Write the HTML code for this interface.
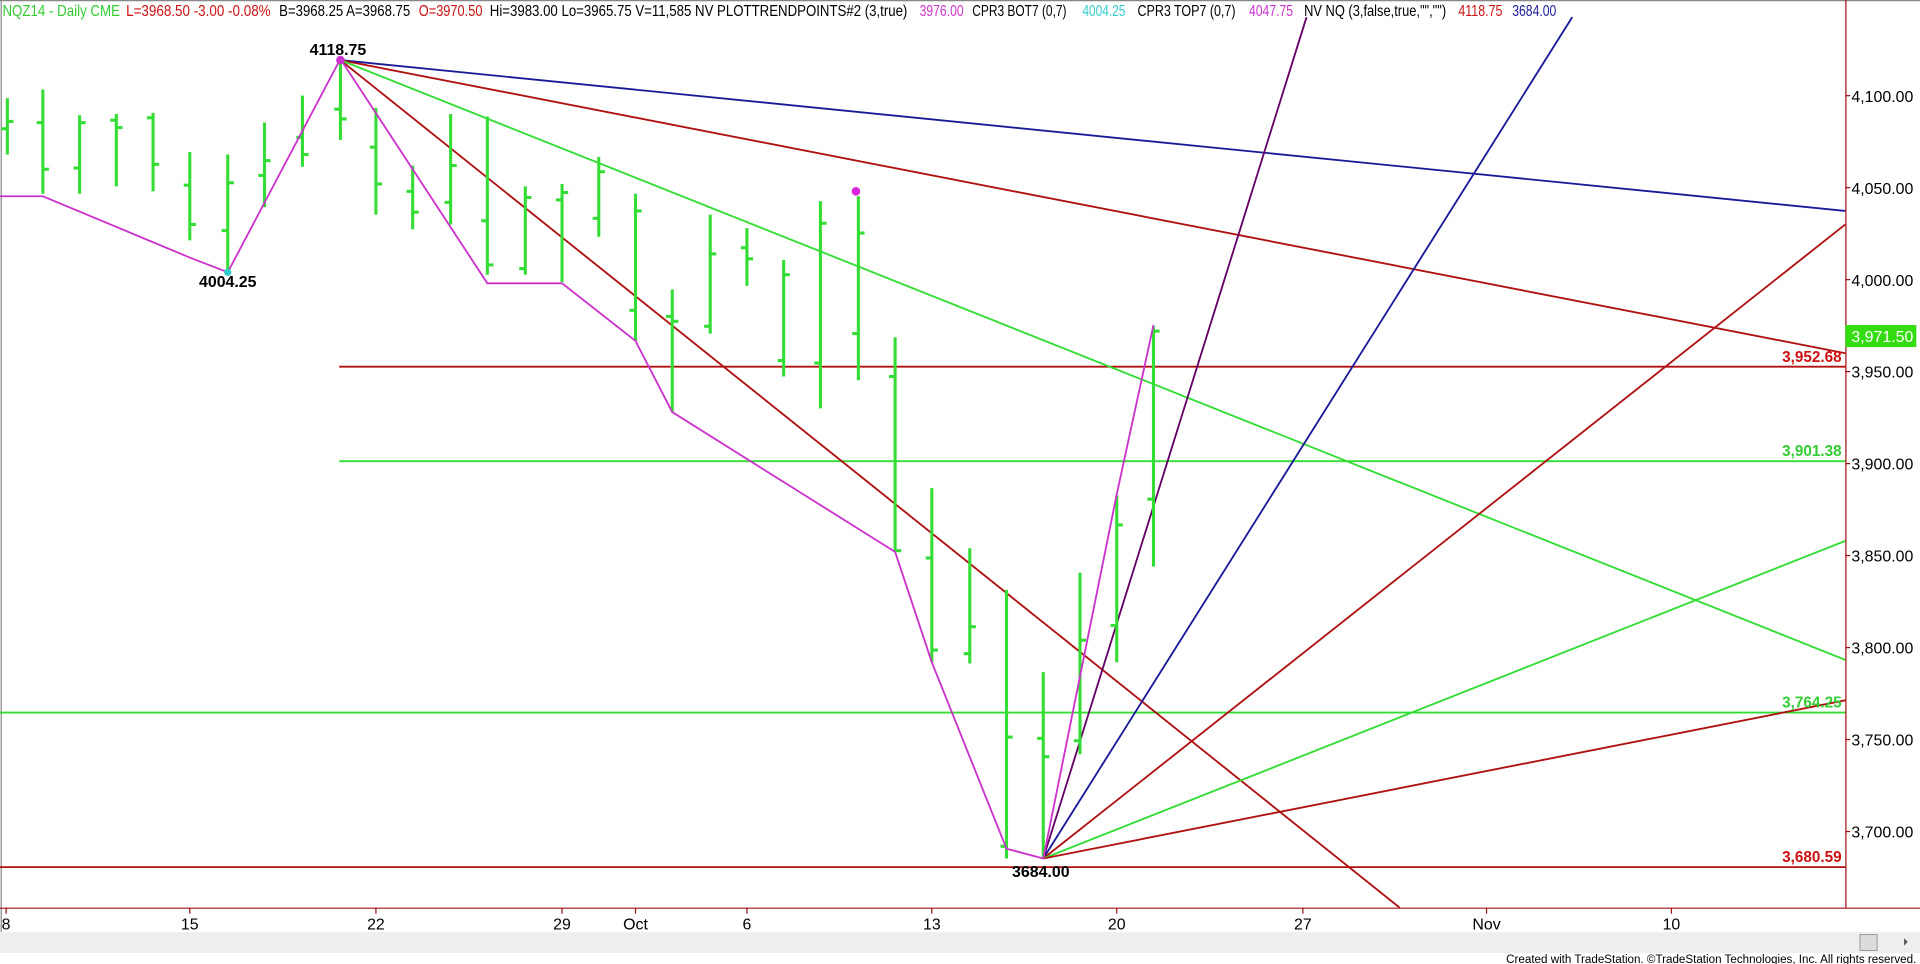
<!DOCTYPE html>
<html><head><meta charset="utf-8"><style>
html,body{margin:0;padding:0;background:#fff;width:1920px;height:964px;overflow:hidden}
svg{display:block}
text{font-family:"Liberation Sans",Arial,sans-serif}
</style></head><body>
<svg width="1920" height="964" viewBox="0 0 1568 786" preserveAspectRatio="none" xmlns="http://www.w3.org/2000/svg">
<rect x="0" y="0" width="1568" height="786" fill="#fff"/>
<line x1="1" y1="0" x2="1" y2="760" stroke="#888" stroke-width="1"/>
<line x1="0" y1="0.5" x2="1568" y2="0.5" stroke="#888" stroke-width="1"/>
<g font-size="13">
<text x="2" y="13" fill="#33cc33" textLength="96" lengthAdjust="spacingAndGlyphs">NQZ14 - Daily  CME</text>
<text x="103" y="13" fill="#cc1111" textLength="118" lengthAdjust="spacingAndGlyphs">L=3968.50  -3.00  -0.08%</text>
<text x="228" y="13" fill="#000" textLength="107" lengthAdjust="spacingAndGlyphs">B=3968.25  A=3968.75</text>
<text x="342" y="13" fill="#cc1111" textLength="52" lengthAdjust="spacingAndGlyphs">O=3970.50</text>
<text x="400" y="13" fill="#000" textLength="341" lengthAdjust="spacingAndGlyphs">Hi=3983.00  Lo=3965.75  V=11,585  NV  PLOTTRENDPOINTS#2 (3,true)</text>
<text x="751" y="13" fill="#cc33cc" textLength="36" lengthAdjust="spacingAndGlyphs">3976.00</text>
<text x="794" y="13" fill="#000" textLength="77" lengthAdjust="spacingAndGlyphs">CPR3 BOT7 (0,7)</text>
<text x="884" y="13" fill="#33cccc" textLength="35" lengthAdjust="spacingAndGlyphs">4004.25</text>
<text x="929" y="13" fill="#000" textLength="80" lengthAdjust="spacingAndGlyphs">CPR3 TOP7 (0,7)</text>
<text x="1020" y="13" fill="#cc33cc" textLength="36" lengthAdjust="spacingAndGlyphs">4047.75</text>
<text x="1065" y="13" fill="#000" textLength="116" lengthAdjust="spacingAndGlyphs">NV NQ (3,false,true,"","")</text>
<text x="1191" y="13" fill="#cc1111" textLength="36" lengthAdjust="spacingAndGlyphs">4118.75</text>
<text x="1235" y="13" fill="#1a1a99" textLength="36" lengthAdjust="spacingAndGlyphs">3684.00</text>
</g>
<line x1="277" y1="299" x2="1507" y2="299" stroke="#b01010" stroke-width="1.5"/>
<line x1="277" y1="376" x2="1507" y2="376" stroke="#33dd33" stroke-width="1.5"/>
<line x1="0" y1="581" x2="1507" y2="581" stroke="#33dd33" stroke-width="1.5"/>
<line x1="0" y1="707" x2="1507" y2="707" stroke="#b01010" stroke-width="1.5"/>
<line x1="278" y1="49" x2="1507" y2="172" stroke="#1a1a99" stroke-width="1.5"/>
<line x1="278" y1="49" x2="1507" y2="288" stroke="#b01010" stroke-width="1.5"/>
<line x1="278" y1="49" x2="1143" y2="740" stroke="#b01010" stroke-width="1.5"/>
<line x1="278" y1="49" x2="1507" y2="538" stroke="#33dd33" stroke-width="1.5"/>
<line x1="852" y1="700" x2="1067" y2="14" stroke="#660066" stroke-width="1.5"/>
<line x1="852" y1="700" x2="1284" y2="14" stroke="#1a1a99" stroke-width="1.5"/>
<line x1="852" y1="700" x2="1507" y2="183" stroke="#b01010" stroke-width="1.5"/>
<line x1="852" y1="700" x2="1507" y2="441" stroke="#33dd33" stroke-width="1.5"/>
<line x1="852" y1="700" x2="1507" y2="571" stroke="#b01010" stroke-width="1.5"/>
<g stroke="#33dd33" stroke-width="2.5" fill="none" id="bars"></g>
<polyline points="0,160 35,160 155,210 186,222 278,48 398,231 459,231 519,278 549,336 731,450 761,540 822,692 852,700 912,403 942,265" fill="none" stroke="#cc33cc" stroke-width="1.5"/>
<circle cx="278" cy="49" r="3.5" fill="#cc33cc"/>
<circle cx="699" cy="156" r="3.5" fill="#dd22dd"/>
<circle cx="186" cy="222" r="3" fill="#33cccc"/>
<g font-weight="bold" font-size="13" text-anchor="middle" fill="#000">
<text x="276" y="45">4118.75</text>
<text x="186" y="234">4004.25</text>
<text x="850" y="715">3684.00</text>
</g>
<g font-weight="bold" font-size="12.5" text-anchor="end">
<text x="1504" y="295" fill="#cc1111">3,952.68</text>
<text x="1504" y="372" fill="#33cc33">3,901.38</text>
<text x="1504" y="577" fill="#33cc33">3,764.25</text>
<text x="1504" y="703" fill="#cc1111">3,680.59</text>
</g>
<line x1="1507.5" y1="0" x2="1507.5" y2="740" stroke="#a01010" stroke-width="1"/>
<line x1="0" y1="740.5" x2="1568" y2="740.5" stroke="#a01010" stroke-width="1"/>
<rect x="1507" y="265" width="58" height="18" fill="#33dd11"/>
<text x="1512" y="279" font-size="13" fill="#fff">3,971.50</text>
<g font-size="13" fill="#000" id="yax"></g>
<g font-size="13" fill="#000" text-anchor="middle" id="xax"></g>
<rect x="0" y="760" width="1568" height="17" fill="#eeeeee"/>
<rect x="1519" y="762" width="14" height="13" fill="#dcdcdc" stroke="#999" stroke-width="0.8"/>
<path d="M1555,765 L1558,768 L1555,771 Z" fill="#555"/>
<text x="1565" y="785" font-size="9.5" fill="#000" text-anchor="end">Created with TradeStation. ©TradeStation Technologies, Inc. All rights reserved.</text>
</svg>
<script>
var NS="http://www.w3.org/2000/svg";
function el(p,t,a,txt){var e=document.createElementNS(NS,t);for(var k in a)e.setAttribute(k,a[k]);if(txt)e.textContent=txt;p.appendChild(e);return e;}
var bars=[[6,80,126,105,99],[35,73,158,100,138],[65,94,158,137,100],[95,93,152,98,104],[125,92,156,96,134],[155,124,196,151,183],[186,126,222,188,149],[216,100,169,143,131],[247,78,136,112,126],[278,48,114,89,97],[307,88,175,120,150],[337,135,187,156,173],[368,93,183,165,135],[398,95,224,180,216],[429,152,224,219,161],[459,150,230,163,157],[489,128,193,178,140],[519,158,278,253,172],[549,236,336,258,262],[580,175,272,266,207],[610,186,233,202,211],[640,212,307,294,224],[670,164,333,296,182],[701,160,310,272,190],[731,275,450,307,449],[761,398,540,455,530],[792,447,541,533,511],[822,481,700,690,601],[852,548,700,602,617],[882,467,615,604,522],[912,404,540,510,428],[942,266,462,407,270]];
var g=document.getElementById("bars");
bars.forEach(function(b){el(g,"line",{x1:b[0],y1:b[1],x2:b[0],y2:b[2]});el(g,"line",{x1:b[0]-5,y1:b[3],x2:b[0],y2:b[3]});el(g,"line",{x1:b[0],y1:b[4],x2:b[0]+5,y2:b[4]});});
var y=document.getElementById("yax");
for(var p=4100;p>=3700;p-=50){var yy=78+(4100-p)*1.5;el(y,"line",{x1:1507,y1:yy,x2:1511,y2:yy,stroke:"#a01010"});el(y,"text",{x:1512,y:yy+5},p.toLocaleString("en-US")+".00");}
var x=document.getElementById("xax");
[[5,"8"],[155,"15"],[307,"22"],[459,"29"],[519,"Oct"],[610,"6"],[761,"13"],[912,"20"],[1064,"27"],[1214,"Nov"],[1365,"10"]].forEach(function(d){el(x,"line",{x1:d[0],y1:740,x2:d[0],y2:745,stroke:"#a01010"});el(x,"text",{x:d[0],y:758},d[1]);});
</script>
</body></html>
